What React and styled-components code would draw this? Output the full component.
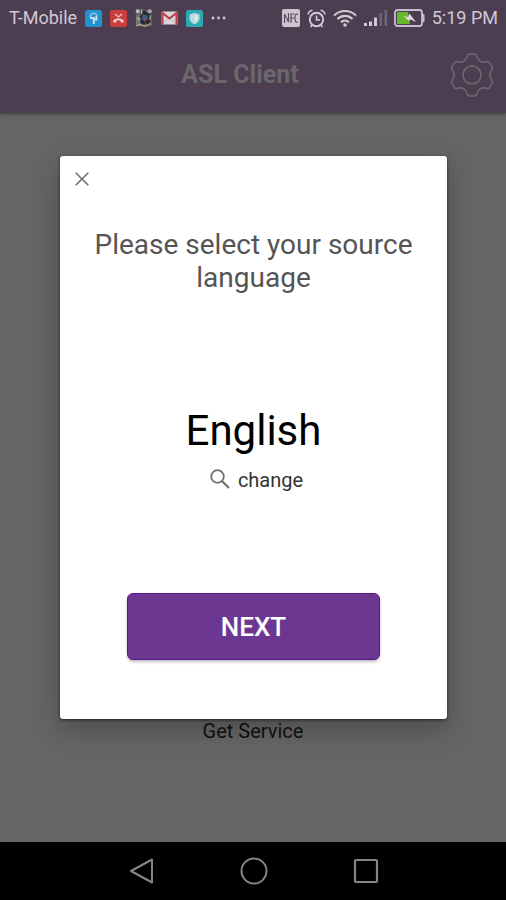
import React from "react";
import styled, { createGlobalStyle } from "styled-components";

const GlobalStyle = createGlobalStyle`
  * { box-sizing: border-box; }
  body { margin: 0; background: #656565; font-family: Roboto, "Liberation Sans", sans-serif; }
  button { font: inherit; border: 0; background: none; padding: 0; cursor: pointer; }
  svg { display: block; flex: none; }
`;

const Screen = styled.div`
  position: relative;
  display: flex;
  flex-direction: column;
  min-height: 100vh;
`;

const TopBar = styled.header`
  background: #4c3e50;
  box-shadow: 0 1px 4px rgba(0, 0, 0, 0.4);
`;

const StatusBar = styled.div`
  display: flex;
  justify-content: space-between;
  align-items: center;
  height: 36px;
  padding: 0 8px 0 9px;
  color: #d3c8d6;
  font-size: 18px;
  line-height: 24px;
  white-space: nowrap;
`;

const StatusGroup = styled.div`
  display: flex;
  align-items: center;
  gap: ${(p) => p.$gap}px;
`;

const AppBar = styled.div`
  display: grid;
  grid-template-columns: 1fr 44px;
  align-items: center;
  height: 77px;
  padding: 0 12px 0 30px;
`;

const AppTitle = styled.h1`
  margin: 0;
  text-align: center;
  font-size: 25px;
  line-height: 32px;
  font-weight: 700;
  color: #6a666c;
`;

const Content = styled.main`
  flex: 1;
  display: flex;
  flex-direction: column;
  justify-content: flex-end;
  align-items: center;
  padding-bottom: 99px;
`;

const ServiceButton = styled.button`
  font-size: 20px;
  line-height: 24px;
  color: #111;
`;

const NavBar = styled.nav`
  display: grid;
  grid-template-columns: repeat(3, 112px);
  justify-content: center;
  height: 58px;
  padding-left: 2px;
  background: #000;
  color: #858585;
`;

const NavButton = styled.button`
  display: flex;
  align-items: center;
  justify-content: center;
  color: inherit;
`;

const Overlay = styled.div`
  position: absolute;
  inset: 0;
  padding: 156px 59px 0 60px;
`;

const Dialog = styled.section`
  display: flex;
  flex-direction: column;
  align-items: center;
  padding-bottom: 59px;
  border-radius: 3px;
  background: #fff;
  box-shadow: 0 1px 3px rgba(0, 0, 0, 0.6), 0 10px 26px rgba(0, 0, 0, 0.25);
`;

const CloseButton = styled.button`
  align-self: flex-start;
  display: flex;
  align-items: center;
  justify-content: center;
  width: 44px;
  height: 46px;
  color: #707070;
`;

const Prompt = styled.h2`
  margin: 26px 24px 112px;
  text-align: center;
  font-size: 28px;
  line-height: 33px;
  font-weight: 400;
  color: #555;
`;

const Language = styled.div`
  font-size: 42px;
  line-height: 50px;
  color: #000;
`;

const ChangeButton = styled.button`
  display: flex;
  align-items: center;
  gap: 8px;
  margin: 12px 0 101px;
  padding-left: 6px;
  font-size: 20px;
  line-height: 24px;
  color: #333;
`;

const NextButton = styled.button`
  width: calc(100% - 134px);
  height: 67px;
  border: 1px solid #5c148c;
  border-radius: 6px;
  background: #6c3791;
  box-shadow: 0 2px 3px rgba(0, 0, 0, 0.25);
  color: #fff;
  font-size: 26px;
  line-height: 32px;
  font-weight: 500;
`;

const FacebookIcon = () => (
  <svg width="17" height="17" viewBox="0 0 17 17">
    <rect width="17" height="17" rx="2.5" fill="#2592d0" />
    <path d="M5.300 7.500C4.300 2 12.700 2 11.700 6.500" stroke="#8dc3e3" strokeWidth="1.600" fill="none" />
    <path d="M8.800 14V7.200M5.300 8h3.500M8.800 9.500h2.600V6" stroke="#d3e3ed" strokeWidth="1.800" fill="none" />
  </svg>
);

const MissedIcon = () => (
  <svg width="17" height="17" viewBox="0 0 17 17">
    <rect width="17" height="17" rx="2.5" fill="#ca3e3f" />
    <path d="M5 4l3.500 3L12 4" stroke="#e4c9cd" strokeWidth="1.300" fill="none" />
    <path d="M3 12c0-4.700 11-4.700 11 0l-2.700.7-.8-2c-1.200-.5-2.800-.5-4 0l-.8 2z" fill="#eed4d7" />
  </svg>
);

const GameIcon = () => (
  <svg width="18" height="20" viewBox="0 0 19 20">
    <path d="M1 1h17v18H1z" fill="#55565a" />
    <path d="M1 7l5-1 2 4-3 3 2 5H1z" fill="#75766d" />
    <path d="M7 4l3-2 3 3 3-1 1 6-3 7-3-2-2 2-3-2-1-6z" fill="#242a35" />
    <path d="M8 6l5 1 1 4-4 2-3-2z" fill="#425c82" />
    <path d="M10 11l2 1-1 2-2-1z" fill="#a14d42" />
    <circle cx="3" cy="3" r="2.200" fill="#b6bdb7" />
    <circle cx="15.500" cy="3" r="2.200" fill="#a6ada8" />
    <path d="M7 1v5M2 10l3 1-1 2M1 18l5-1 4 1.500 4-1M14 17l3-1M16 7v5" stroke="#a6a890" strokeWidth="1.500" fill="none" />
  </svg>
);

const MailIcon = () => (
  <svg width="17" height="14" viewBox="0 0 17 14">
    <rect x=".5" y=".5" width="16" height="13" rx="1.300" fill="#dcd5dc" />
    <path d="M1.500 13V2l7 5.500 7-5.500v11" stroke="#bd3d42" strokeWidth="2" fill="none" />
    <path d="M3 12l4-4M14 12l-4-4" stroke="#beb5be" strokeWidth=".8" />
  </svg>
);

const ShieldIcon = () => (
  <svg width="17" height="17" viewBox="0 0 17 17">
    <rect width="17" height="17" rx="2.500" fill="#2ba9b1" />
    <path d="M8.500 2.800l5 1.800v4.200c0 2.500-2.500 4.500-5 5.700-2.500-1.200-5-3.200-5-5.700V4.600z" fill="#b5dadd" />
    <path d="M8.500 4.800v7.300c1.700-1 3-2.100 3-3.700V5.700z" fill="#dceaea" />
  </svg>
);

const MoreIcon = () => (
  <svg width="15" height="4" viewBox="0 0 15 4" fill="#d3c8d6">
    <circle cx="2" cy="2" r="1.400" />
    <circle cx="7.500" cy="2" r="1.400" />
    <circle cx="13" cy="2" r="1.400" />
  </svg>
);

const NfcIcon = () => (
  <svg width="18" height="18" viewBox="0 0 18 18">
    <rect width="18" height="18" rx="2" fill="#cdc4cf" />
    <path d="M2.500 14V5l4 8V4M9 14V5h3.500M9 9h3M16 5.500c-2.700-1-3 .5-3 3.500s.3 5 3 4" stroke="#5b4e60" strokeWidth="1.200" fill="none" />
  </svg>
);

const AlarmIcon = () => (
  <svg width="19" height="19" viewBox="0 0 19 19" fill="none" stroke="#d3c8d6">
    <circle cx="9.500" cy="10.500" r="6.700" strokeWidth="1.900" />
    <path d="M9.500 6.500v4.500h3.500" strokeWidth="1.600" />
    <path d="M1 5.500C1.500 3 3 1.500 5.500 1.200M18 5.500C17.500 3 16 1.500 13.500 1.200M5 16l-1.500 2M14 16l1.500 2" strokeWidth="1.500" />
  </svg>
);

const WifiIcon = () => (
  <svg width="24" height="18" viewBox="0 0 24 18" fill="none" stroke="#d3c8d6" strokeWidth="2.100">
    <path d="M1 6.500c6.300-6 15.700-6 22 0M4.500 10c4.300-4.200 10.700-4.200 15 0M8 13.200c2.300-2.200 5.700-2.200 8 0" />
    <circle cx="12" cy="16" r="1.800" fill="#d3c8d6" stroke="none" />
  </svg>
);

const SignalIcon = () => (
  <svg width="23" height="18" viewBox="0 0 23 18">
    <path d="M0 14h3v3H0zM5 12.500h3V17H5zM10 8.500h3V17h-3z" fill="#d3c8d6" />
    <path d="M15.500 4H18v13h-2.500zM20.500 1H23v16h-2.500z" fill="#706375" />
  </svg>
);

const BatteryIcon = () => (
  <svg width="31" height="18" viewBox="0 0 31 18">
    <rect x="1" y="1" width="27" height="16" rx="2.500" fill="none" stroke="#c8bfca" strokeWidth="1.800" />
    <path d="M28 5h1.500q1 0 1 1v6q0 1-1 1H28z" fill="#c8bfca" />
    <path d="M3 3h11l2 12H3z" fill="#65b72c" />
    <path d="M9.500 7l4.500 1 1.500-3.500 3 4 3.500 4.500-5.500-2.500-1.500 1.500z" fill="#ddd6df" />
  </svg>
);

const GearIcon = () => (
  <svg width="44" height="44" viewBox="0 0 44 44" fill="none" stroke="#6f6972" strokeWidth="1.600" strokeLinejoin="round">
    <path d="M19 1h6q1.200 0 1.500 1.200c.9 4 3.800 7.600 8.300 6.800l2.700-.5q1.200-.2 1.900.9l2.900 5q.6 1.100-.2 2.100c-2.700 3.400-2.700 7.600 0 11q.8 1 .2 2.100l-2.900 5q-.7 1.100-1.900.9l-2.700-.5c-4.500-.8-7.400 2.800-8.300 6.800q-.3 1.200-1.500 1.200h-6q-1.200 0-1.500-1.200c-.9-4-3.800-7.600-8.300-6.800l-2.700.5q-1.200.2-1.900-.9l-2.900-5q-.6-1.100.2-2.100c2.700-3.400 2.700-7.600 0-11q-.8-1-.2-2.100l2.900-5q.7-1.100 1.900-.9l2.700.5c4.500.8 7.400-2.800 8.300-6.800Q17.800 1 19 1z" />
    <circle cx="22" cy="22" r="9" />
  </svg>
);

const CloseIcon = () => (
  <svg width="14" height="14" viewBox="0 0 14 14" fill="none" stroke="currentColor" strokeWidth="1.600">
    <path d="M.7.7l12.600 12.600M13.300.7L.7 13.300" />
  </svg>
);

const SearchIcon = () => (
  <svg width="20" height="22" viewBox="0 0 20 22" fill="none" stroke="#707070">
    <circle cx="7.500" cy="7.500" r="6.300" strokeWidth="1.800" />
    <path d="M12 12l7 7" strokeWidth="2.200" />
  </svg>
);

const BackIcon = () => (
  <svg width="26" height="28" viewBox="0 0 26 28" fill="none" stroke="currentColor" strokeWidth="2" strokeLinejoin="round">
    <path d="M23 2.500v23L2 14z" />
  </svg>
);

const HomeIcon = () => (
  <svg width="28" height="28" viewBox="0 0 28 28" fill="none" stroke="currentColor" strokeWidth="2">
    <circle cx="14" cy="14" r="12.500" />
  </svg>
);

const RecentIcon = () => (
  <svg width="26" height="26" viewBox="0 0 26 26" fill="none" stroke="currentColor" strokeWidth="2.200">
    <rect x="2" y="2" width="22" height="22" rx="1" />
  </svg>
);

export default function App() {
  return (
    <Screen>
      <GlobalStyle />
      <TopBar>
        <StatusBar>
          <StatusGroup $gap={8}>
            <span>T-Mobile</span>
            <FacebookIcon />
            <MissedIcon />
            <GameIcon />
            <MailIcon />
            <ShieldIcon />
            <MoreIcon />
          </StatusGroup>
          <StatusGroup $gap={7}>
            <NfcIcon />
            <AlarmIcon />
            <WifiIcon />
            <SignalIcon />
            <BatteryIcon />
            <span>5:19 PM</span>
          </StatusGroup>
        </StatusBar>
        <AppBar>
          <AppTitle>ASL Client</AppTitle>
          <button type="button" aria-label="Settings"><GearIcon /></button>
        </AppBar>
      </TopBar>
      <Content>
        <ServiceButton type="button">Get Service</ServiceButton>
      </Content>
      <NavBar>
        <NavButton type="button" aria-label="Back"><BackIcon /></NavButton>
        <NavButton type="button" aria-label="Home"><HomeIcon /></NavButton>
        <NavButton type="button" aria-label="Recent apps"><RecentIcon /></NavButton>
      </NavBar>
      <Overlay>
        <Dialog role="dialog" aria-modal="true" aria-labelledby="prompt">
          <CloseButton type="button" aria-label="Close"><CloseIcon /></CloseButton>
          <Prompt id="prompt">Please select your source language</Prompt>
          <Language>English</Language>
          <ChangeButton type="button"><SearchIcon />change</ChangeButton>
          <NextButton type="button">NEXT</NextButton>
        </Dialog>
      </Overlay>
    </Screen>
  );
}
